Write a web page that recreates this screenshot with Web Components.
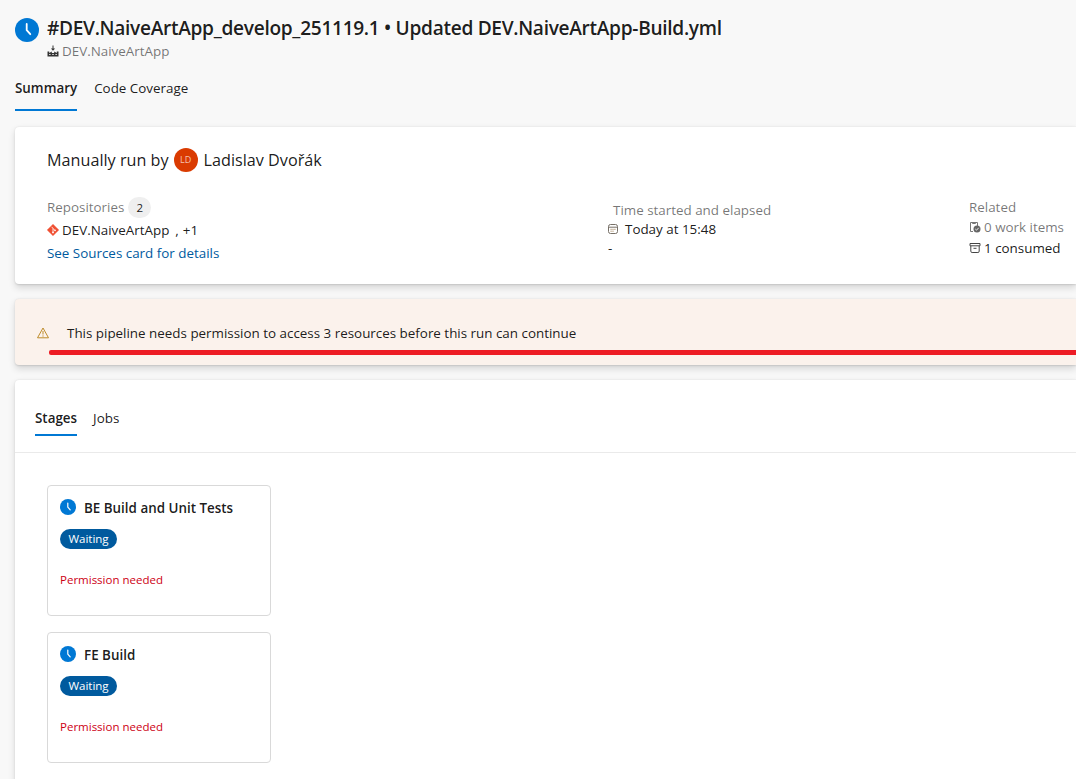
<!DOCTYPE html>
<html lang="en">
<head>
<meta charset="utf-8">
<title>Pipeline run</title>
<style>
   html { overflow: hidden; }
   body {
      margin: 0;
      height: 779px;
      overflow: hidden;
      background-color: #f8f8f8;
      color: rgba(0,0,0,.9);
      font: 13.4px/20px "Open Sans", "Noto Sans", sans-serif;
   }
</style>
</head>
<body>
<pipeline-run></pipeline-run>
<script>
const icons = {
   clock: `<svg viewBox="0 0 24 24"><circle cx="12" cy="12" r="12" fill="#0078d4"/><path d="M11.7 6v6.2l3.6 4" fill="none" stroke="#fff" stroke-width="1.8" stroke-linecap="round" stroke-linejoin="round"/></svg>`,
   build: `<svg viewBox="0 0 12 12"><g fill="#333"><path d="M.5 6.5h1.7V8l2.6-1.5V8h2.4V6.5L9.8 8V6.5h1.7v5H.5z"/><path d="M5.5.5h1v3h1.6L6 5.7 3.900 3.500h1.600z"/></g><path d="M2.200 9.500h1.300m1.800 0h1.400m1.800 0h1.300" stroke="#f8f8f8"/></svg>`,
   git: `<svg viewBox="0 0 12 12"><path d="M6 .2 11.800 6 6 11.800.2 6z" fill="#f05033" stroke="#f05033" stroke-width=".4" stroke-linejoin="round"/><path d="M4.500 2.800 6 4.300v4.200M6 4.500l2 2" stroke="#fff" stroke-width=".8" fill="none"/><circle cx="6" cy="8.400" r=".9" fill="#fff"/><circle cx="8" cy="6.400" r=".8" fill="#fff"/></svg>`,
   calendar: `<svg viewBox="0 0 10 10"><rect x=".5" y=".5" width="9" height="9" rx="2" fill="none" stroke="#777067"/><path d="M.5 3.200h9" stroke="#777067"/><path d="M2.500 5.300h5M2.500 7.200h3.200" stroke="#a98d68" stroke-dasharray="1.200 .7"/></svg>`,
   workitem: `<svg viewBox="0 0 12 12"><path d="M4 10.500H1.500v-9h7V5M3.500 1.500v1h3v-1" fill="none" stroke="#777"/><circle cx="8" cy="8" r="3.500" fill="#666"/><path d="m6.300 8 1.200 1.200 2.200-2.400" fill="none" stroke="#fff" stroke-width=".9"/></svg>`,
   archive: `<svg viewBox="0 0 12 12"><path d="M1 1.500h10v2.300H1zM1.800 4v5.200q0 1.300 1.300 1.300h5.800q1.300 0 1.300-1.300V4M4.500 6.300h3" fill="none" stroke="#444"/></svg>`,
   warning: `<svg viewBox="0 0 12 12"><path d="M6 1 11.500 10.800H.5z" fill="none" stroke="#bd8b2a" stroke-linejoin="round"/><path d="M6 4v3.500M6 8.400v1.200" stroke="#bd8b2a"/></svg>`,
};

class RunIcon extends HTMLElement {
   constructor() {
      super();
      this.attachShadow({ mode: "open" });
   }

   connectedCallback() {
      const size = this.getAttribute("size") || 12;
      this.shadowRoot.innerHTML = `
<style>
:host { display: block; flex: none; width: ${size}px; height: ${size}px; }
svg { display: block; width: 100%; height: 100%; }
</style>
${icons[this.getAttribute("name")]}`;
   }
}
customElements.define("run-icon", RunIcon);

class RunTab extends HTMLElement {
   constructor() {
      super();
      this.attachShadow({ mode: "open" }).innerHTML = `
<style>
:host { display: block; box-sizing: border-box; height: 33px; white-space: nowrap; }
:host([selected]) { font-weight: 600; border-bottom: 2px solid #0078d4; }
</style>
<slot></slot>`;
   }
}
customElements.define("run-tab", RunTab);

class RunCard extends HTMLElement {
   constructor() {
      super();
      this.attachShadow({ mode: "open" }).innerHTML = `
<style>
:host {
   display: block;
   box-sizing: border-box;
   background-color: #fff;
   border-radius: 4px 0 0 4px;
   box-shadow: 0 3.200px 7.200px rgba(0,0,0,.132), 0 .6px 1.800px rgba(0,0,0,.108);
}
</style>
<slot></slot>`;
   }
}
customElements.define("run-card", RunCard);

class RunHeader extends HTMLElement {
   constructor() {
      super();
      this.attachShadow({ mode: "open" }).innerHTML = `
<style>
:host { display: block; padding: 15px 0 0 15px; }
.heading { display: flex; gap: 8px; height: 63px; }
.status { margin-top: 3px; }
h1 { margin: 0; font-size: 19.100px; line-height: 26px; font-weight: 600; letter-spacing: -.3px; white-space: nowrap; }
.pipeline { display: flex; align-items: center; gap: 3px; height: 19px; color: rgba(0,0,0,.55); }
nav { display: flex; gap: 17px; }
</style>
<div class="heading">
   <run-icon class="status" name="clock" size="24"></run-icon>
   <div>
      <h1><slot name="title"></slot></h1>
      <div class="pipeline"><run-icon name="build"></run-icon><slot name="pipeline"></slot></div>
   </div>
</div>
<nav>
   <run-tab selected>Summary</run-tab>
   <run-tab>Code Coverage</run-tab>
</nav>`;
   }
}
customElements.define("run-header", RunHeader);

class RunSummary extends HTMLElement {
   constructor() {
      super();
      this.attachShadow({ mode: "open" }).innerHTML = `
<style>
:host { display: block; padding: 20px 0 0 32px; white-space: nowrap; }
.by { display: flex; align-items: center; gap: 6px; height: 26px; font-size: 16.200px; }
.avatar { width: 24px; height: 24px; border-radius: 50%; background-color: #da3b01; color: #f6c2af; font-size: 9px; line-height: 24px; text-align: center; margin-left: -1px; }
.columns { display: grid; grid-template-columns: 561px 361px auto; margin-top: 23px; }
.label { color: rgba(0,0,0,.55); }
.line { display: flex; align-items: center; gap: 3px; }
.count { width: 23px; height: 21px; border-radius: 11px; background-color: #efefef; font-size: 11.500px; line-height: 21px; text-align: center; margin-left: 1px; color: rgba(0,0,0,.9); }
.repos > :nth-child(1) { height: 22px; }
.repos > :nth-child(2) { height: 24px; }
.repos a { display: block; color: #005a9e; line-height: 22px; }
.time { padding-top: 4px; }
.time .label { padding-left: 5px; }
.time .line { height: 19px; gap: 7px; margin-top: -1px; }
.related { padding-top: 1px; }
.related .line { height: 19px; }
.related .line:last-child { height: 24px; }
</style>
<div class="by"><span>Manually run by</span><span class="avatar">LD</span><slot></slot></div>
<div class="columns">
   <div class="repos">
      <div class="line label"><span>Repositories</span><span class="count">2</span></div>
      <div class="line"><run-icon name="git"></run-icon><span id="repo">DEV.NaiveArtApp</span><span style="margin-left:3px">,</span><span style="margin-left:1px">+1</span></div>
      <a>See Sources card for details</a>
   </div>
   <div class="time">
      <div class="label">Time started and elapsed</div>
      <div class="line"><run-icon name="calendar" size="10"></run-icon><span>Today at 15:48</span></div>
      <div>-</div>
   </div>
   <div class="related">
      <div class="label">Related</div>
      <div class="line label"><run-icon name="workitem"></run-icon><span>0 work items</span></div>
      <div class="line"><run-icon name="archive"></run-icon><span>1 consumed</span></div>
   </div>
</div>`;
   }
}
customElements.define("run-summary", RunSummary);

class RunWarning extends HTMLElement {
   constructor() {
      super();
      this.attachShadow({ mode: "open" }).innerHTML = `
<style>
:host { display: flex; align-items: center; gap: 18px; position: relative; height: 66px; padding: 2px 0 0 22px; box-sizing: border-box; white-space: nowrap; }
/* hand drawn marker under the message */
.marker { position: absolute; left: 34px; right: 0; bottom: 10px; height: 5px; border-radius: 2px 0 0 2px; background-color: #ed1c24; }
</style>
<run-icon name="warning"></run-icon><span><slot></slot></span><div class="marker"></div>`;
   }
}
customElements.define("run-warning", RunWarning);

class RunStage extends HTMLElement {
   constructor() {
      super();
      this.attachShadow({ mode: "open" }).innerHTML = `
<style>
:host { display: block; box-sizing: border-box; width: 224px; height: 131px; padding: 12px; border: 1px solid #d9d9d9; border-radius: 4px; white-space: nowrap; }
.name { display: flex; align-items: center; gap: 8px; height: 20px; font-weight: 600; }
run-icon { margin-top: -2px; }
.pill { width: 57px; height: 20px; margin-top: 11px; border-radius: 10px; background-color: #005a9e; color: #fff; font-size: 11.500px; line-height: 20px; text-align: center; }
.check { margin-top: 21px; color: #cd0014; font-size: 11.500px; }
</style>
<div class="name"><run-icon name="clock" size="16"></run-icon><span><slot></slot></span></div>
<div class="pill">Waiting</div>
<div class="check">Permission needed</div>`;
   }
}
customElements.define("run-stage", RunStage);

class RunStages extends HTMLElement {
   constructor() {
      super();
      this.attachShadow({ mode: "open" }).innerHTML = `
<style>
:host { display: block; height: 420px; }
nav { display: flex; gap: 16px; box-sizing: border-box; height: 73px; padding: 23px 0 0 20px; border-bottom: 1px solid #eaeaea; }
nav run-tab { padding-top: 5px; }
.stages { display: flex; flex-direction: column; gap: 16px; padding: 32px; }
</style>
<nav>
   <run-tab selected>Stages</run-tab>
   <run-tab>Jobs</run-tab>
</nav>
<div class="stages"><slot></slot></div>`;
   }
}
customElements.define("run-stages", RunStages);

class PipelineRun extends HTMLElement {
   constructor() {
      super();
      this.attachShadow({ mode: "open" }).innerHTML = `
<style>
:host { display: block; }
main { display: flex; flex-direction: column; gap: 15px; padding: 16px 0 0 15px; }
.summary { height: 157px; }
.warning { height: 66px; background-color: #fbf2ec; }
</style>
<run-header>
   <span slot="title">#DEV.NaiveArtApp_develop_251119.1 • Updated DEV.NaiveArtApp-Build.yml</span>
   <span slot="pipeline">DEV.NaiveArtApp</span>
</run-header>
<main>
   <run-card class="summary"><run-summary>Ladislav Dvořák</run-summary></run-card>
   <run-card class="warning"><run-warning>This pipeline needs permission to access 3 resources before this run can continue</run-warning></run-card>
   <run-card>
      <run-stages>
         <run-stage>BE Build and Unit Tests</run-stage>
         <run-stage>FE Build</run-stage>
      </run-stages>
   </run-card>
</main>`;
   }
}
customElements.define("pipeline-run", PipelineRun);
</script>
</body>
</html>
